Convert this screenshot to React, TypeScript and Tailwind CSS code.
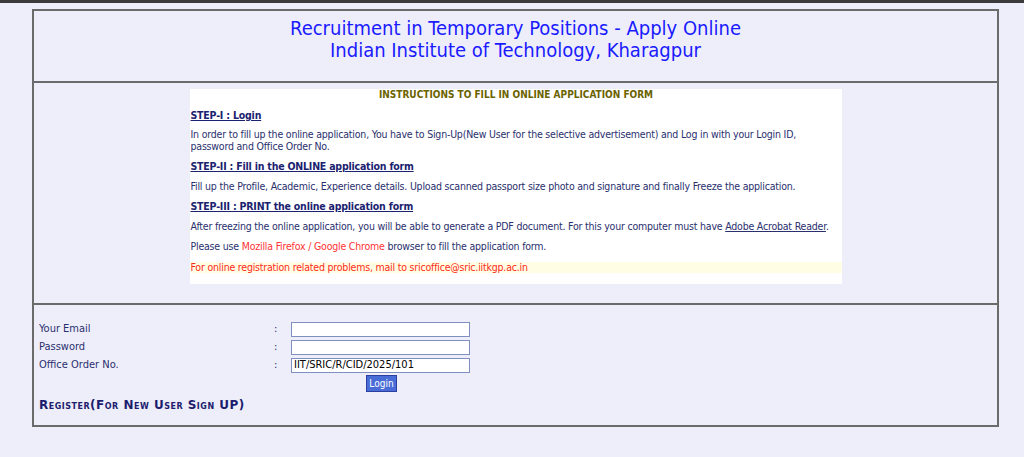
const FONT = { fontFamily: '"DejaVu Sans Condensed", "DejaVu Sans", sans-serif' };

function Step({ children }: { children: React.ReactNode }) {
  return <p className="mt-[8px] text-[10.5px] font-bold leading-[12px] tracking-[-0.2px] text-[#1b2270] underline">{children}</p>;
}

function Para({ children, className = "" }: { children: React.ReactNode; className?: string }) {
  return <p className={`mt-[8px] text-[10.5px] leading-[12px] tracking-[-0.2px] text-[#2a2f6e] ${className}`}>{children}</p>;
}

function Field({ label, value = "" }: { label: string; value?: string }) {
  return (
    <div className="flex h-[18px] items-center">
      <span className="w-[235px] text-[11px] text-[#2a2f6e]">{label}</span>
      <span className="w-[17px] text-[11px] text-[#2a2f6e]">:</span>
      <input
        defaultValue={value}
        className="h-[15px] w-[179px] border border-[#7f8fbf] bg-white px-[2px] text-[11px] text-black outline-none"
        style={FONT}
      />
    </div>
  );
}

export default function App() {
  return (
    <div className="min-h-[457px] bg-[#eeeefa]" style={FONT}>
      <div className="h-[3px] bg-[#3b3b3b]" />
      <div className="mx-[32px] mt-[6px] w-[967px] border-2 border-[#6b6b6b]">
        <header className="flex h-[72px] flex-col items-center border-b-2 border-[#6b6b6b] pt-[6px] text-[20px] leading-[22px] text-[#1a1aff]">
          <p>Recruitment in Temporary Positions - Apply Online</p>
          <p>Indian Institute of Technology, Kharagpur</p>
        </header>

        <section className="flex h-[222px] justify-center border-b-2 border-[#6b6b6b] pt-[6px]">
          <div className="h-[195px] w-[652px] bg-white pl-[1px] pb-[9px]">
            <p className="text-center text-[10px] font-bold leading-[12px] text-[#6b6300]">
              INSTRUCTIONS TO FILL IN ONLINE APPLICATION FORM
            </p>
            <Step>STEP-I : Login</Step>
            <Para className="!mt-[7px]">
              In order to fill up the online application, You have to Sign-Up(New User for the selective advertisement) and Log in with your Login ID, password and Office Order No.
            </Para>
            <Step>
              <span className="mt-[1px] block">STEP-II : Fill in the ONLINE application form</span>
            </Step>
            <Para>
              Fill up the Profile, Academic, Experience details. Upload scanned passport size photo and signature and finally Freeze the application.
            </Para>
            <Step>
              <span className="mt-[1px] block">STEP-III : PRINT the online application form</span>
            </Step>
            <Para>
              After freezing the online application, you will be able to generate a PDF document. For this your computer must have{" "}
              <span className="underline">Adobe Acrobat Reader</span>.
            </Para>
            <Para>
              Please use <span className="text-[#ff3333]">Mozilla Firefox / Google Chrome</span> browser to fill the application form.
            </Para>
            <p className="mt-[10px] h-[11px] bg-[#fffde3] text-[10.5px] leading-[11px] tracking-[-0.2px] text-[#ff2a1a]">
              For online registration related problems, mail to sricoffice@sric.iitkgp.ac.in
            </p>
          </div>
        </section>

        <section className="h-[120px] px-[5px] pt-[15px]">
          <Field label="Your Email" />
          <Field label="Password" />
          <Field label="Office Order No." value="IIT/SRIC/R/CID/2025/101" />
          <div className="flex h-[20px] items-start pl-[327px] pt-[1px]">
            <button className="h-[17px] w-[31px] border border-[#2c3f9e] bg-[#4a6cd6] text-[10px] text-white" style={FONT}>
              Login
            </button>
          </div>
          <p className="mt-[2px] text-[12px] font-bold text-[#1c1c6e] [font-variant:small-caps] tracking-[0.5px]" style={{ fontFamily: '"DejaVu Sans", sans-serif' }}>
            Register(For New User Sign UP)
          </p>
        </section>
      </div>
    </div>
  );
}
